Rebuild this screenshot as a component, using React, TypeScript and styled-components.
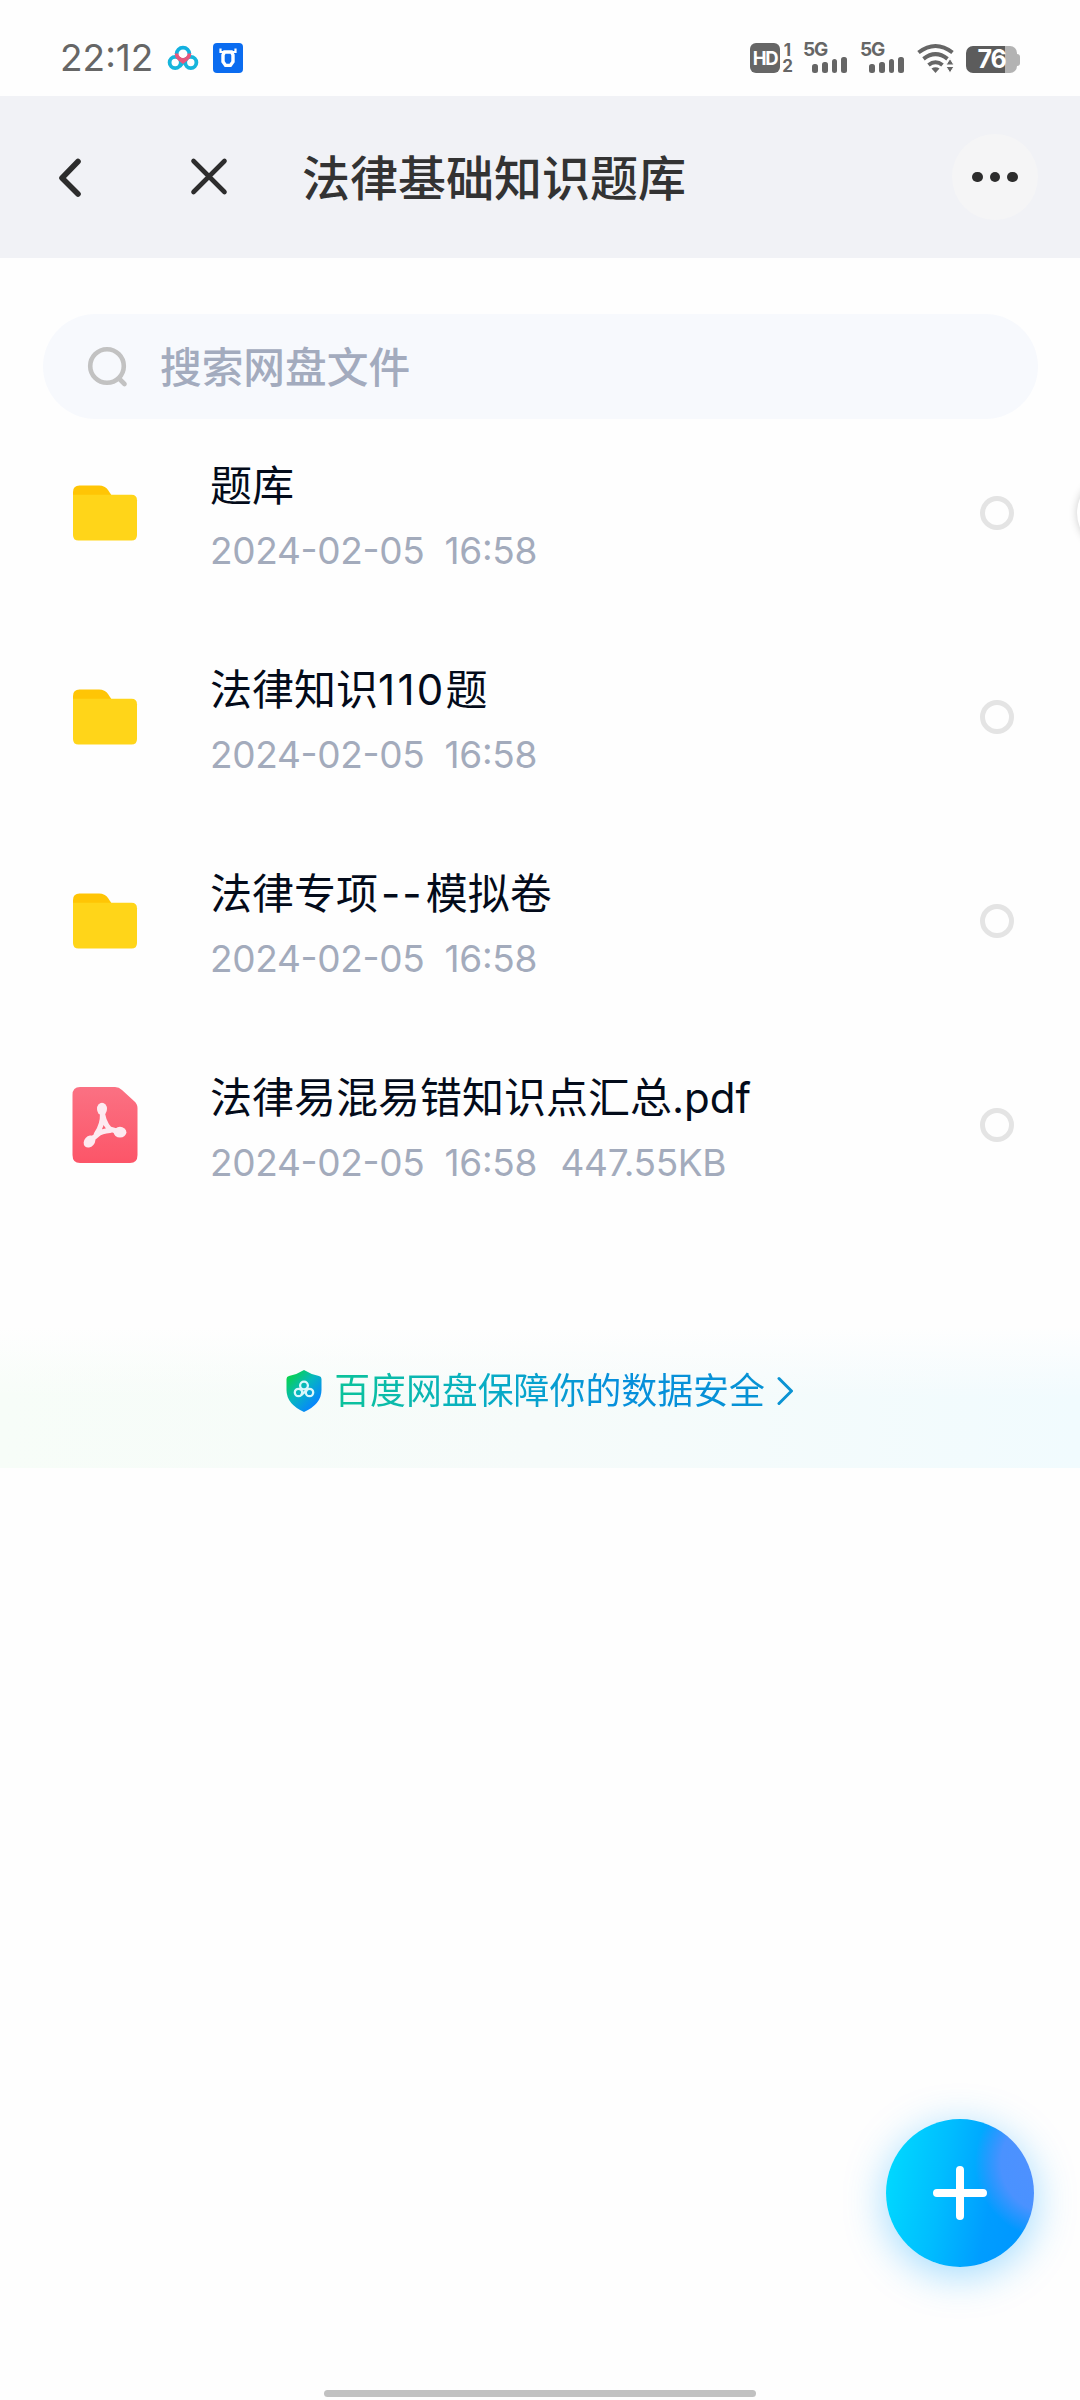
import React from 'react';
import styled, { createGlobalStyle } from 'styled-components';

const GlobalStyle = createGlobalStyle`
  * { box-sizing: border-box; }
  body { margin: 0; background: #fefefe; overflow: hidden; }
`;

const Page = styled.div`
  position: relative;
  width: 1080px;
  height: 2400px;
  overflow: hidden;
  display: flex;
  flex-direction: column;
  background: #fefefe;
  font-family: Inter, "Noto Sans CJK SC", sans-serif;
  font-feature-settings: "calt" 1;
`;

const StatusBar = styled.div`
  height: 96px;
  flex: none;
  display: flex;
  align-items: center;
  padding: 20px 60px 0 60px;
  color: #666;
`;

const Clock = styled.span`
  font-size: 37px;
  line-height: 40px;
  letter-spacing: 0;
  width: 107px;
  white-space: nowrap;
`;

const AppIcons = styled.div`
  display: flex;
  align-items: center;
  gap: 14px;
  flex: 1;
`;

const SystemIcons = styled.div`
  display: flex;
  align-items: center;
`;

const HdGroup = styled.div`
  display: flex;
  gap: 2px;
  margin-right: 10px;
`;

const HdBox = styled.span`
  width: 30px;
  height: 30px;
  border-radius: 6px;
  background: #666;
  color: #fff;
  font: 700 18.5px/30px Inter, sans-serif;
  letter-spacing: -1.4px;
  text-align: center;
`;

const HdSlots = styled.span`
  display: flex;
  flex-direction: column;
  justify-content: space-between;
  width: 11px;
  height: 30px;
  text-align: center;
  font: 700 17px/14px Inter, sans-serif;
`;

const Signal = styled.div`
  display: flex;
  flex-direction: column;
  width: 44px;
  height: 30px;
  margin-right: 13px;
`;

const SignalLabel = styled.span`
  font: 700 19px/14px Inter, sans-serif;
  letter-spacing: -1.2px;
`;

const Bars = styled.span`
  display: flex;
  align-items: flex-end;
  gap: 4px;
  height: 16px;
  padding-left: 9px;
`;

const Bar = styled.i<{ $h: number }>`
  width: 6px;
  height: ${(p) => p.$h}px;
  border-radius: 2.5px;
  background: #666;
`;

const Battery = styled.div`
  display: flex;
  align-items: center;
  margin: 3px 0 0 11px;
`;

const BatteryBody = styled.span`
  width: 51px;
  height: 27px;
  border-radius: 7px;
  background: linear-gradient(90deg, #5c5c5c 39px, #b3b3b3 39px);
  color: #fff;
  font: 700 25px/27px Inter, sans-serif;
  letter-spacing: -1.2px;
  text-align: center;
`;

const BatteryTip = styled.span`
  width: 3px;
  height: 12px;
  border-radius: 0 3px 3px 0;
  background: #b3b3b3;
`;

const Header = styled.header`
  height: 162px;
  flex: none;
  display: flex;
  align-items: center;
  padding: 0 42px 0 50px;
  background: #f1f2f6;
  color: #333;
`;

const IconButton = styled.span<{ $w: number }>`
  display: flex;
  width: ${(p) => p.$w}px;
`;

const Title = styled.h1`
  flex: 1;
  margin: 0;
  padding-top: 3px;
  font-size: 48px;
  line-height: 60px;
  font-weight: 500;
`;

const MoreButton = styled.span`
  display: flex;
  align-items: center;
  justify-content: center;
  gap: 7px;
  width: 86px;
  height: 86px;
  border-radius: 50%;
  background: #f5f5f6;
`;

const Dot = styled.i`
  width: 10.6px;
  height: 10.6px;
  border-radius: 50%;
  background: #2d2d2d;
`;

const SearchBox = styled.div`
  display: flex;
  align-items: center;
  flex: none;
  gap: 31px;
  height: 105px;
  margin: 56px 42px 0 43px;
  padding-left: 44px;
  border-radius: 53px;
  background: #f7f9fd;
  color: #a3abbe;
  font-size: 41.7px;
  font-weight: 500;
  line-height: 60px;
`;

const SearchHint = styled.span`
  padding-top: 3px;
`;

const FileList = styled.div`
  display: flex;
  flex-direction: column;
  flex: none;
  padding-bottom: 100px;
`;

const Row = styled.div`
  display: flex;
  align-items: center;
  height: 204px;
  padding: 0 66px 0 72px;
  &:first-child { margin-top: -8px; }
`;

const IconSlot = styled.span`
  display: flex;
  width: 138px;
`;

const FileInfo = styled.div`
  flex: 1;
  display: flex;
  flex-direction: column;
  gap: 9px;
  padding-top: 10px;
`;

const FileName = styled.span`
  color: #030b1a;
  font-size: 42px;
  line-height: 56px;
  white-space: pre;
`;

const Hyphens = styled.span`
  margin: 0 2px 0 3px;
  letter-spacing: 2px;
`;

const Digits = styled.span`
  letter-spacing: 2.3px;
`;

const FileMeta = styled.span`
  display: flex;
  gap: 23.5px;
  color: #a3abbc;
  font-size: 37px;
  line-height: 56px;
  letter-spacing: -0.32px;
  white-space: pre;
`;

const Radio = styled.span`
  width: 34px;
  height: 34px;
  border: 5px solid #e4e4e4;
  border-radius: 50%;
`;

const SafetyBanner = styled.div`
  display: flex;
  align-items: center;
  justify-content: center;
  flex: none;
  height: 141px;
  padding-bottom: 13px;
  background:
    linear-gradient(180deg, #fefefe 0%, rgba(254, 254, 254, 0) 50%),
    linear-gradient(90deg, #f7fdf8 0%, #f6fbfa 50%, #f1fbfe 100%);
`;

const BannerText = styled.span`
  margin: 0 12px 0 12px;
  font-size: 35.9px;
  line-height: 50px;
  background: linear-gradient(90deg, #0cc39a 0%, #08adc4 35%, #068fdc 65%, #0792d4 100%);
  background-clip: text;
  -webkit-background-clip: text;
  color: transparent;
`;

const SideHandle = styled.div`
  position: absolute;
  left: 1077px;
  top: 475px;
  width: 76px;
  height: 76px;
  border-radius: 50%;
  background: #fff;
  box-shadow: 0 0 9px rgba(0, 0, 0, 0.2);
`;

const AddButton = styled.div`
  position: absolute;
  left: 886px;
  top: 2119px;
  width: 148px;
  height: 148px;
  border-radius: 50%;
  display: flex;
  align-items: center;
  justify-content: center;
  background:
    radial-gradient(circle at 165px 44px, #5090ff 0, #4a92ff 50px, rgba(60, 148, 255, 0) 76px),
    linear-gradient(100deg, #00d8ff 6%, #00bdff 38%, #009dff 68%, #0094ff 100%);
  box-shadow: 0 8px 42px rgba(0, 160, 255, 0.38);
`;

const HomeBar = styled.div`
  position: absolute;
  left: 324px;
  top: 2390px;
  width: 432px;
  height: 7px;
  border-radius: 4px;
  background: #c1c1c1;
`;

const CloudLogo = () => (
  <svg width="32" height="26" viewBox="0 0 32 26" fill="none" strokeWidth="3.8">
    <circle cx="8.2" cy="17.500" r="5.600" stroke="#16b5dc" />
    <circle cx="23.800" cy="17.500" r="5.600" stroke="#16b5dc" />
    <path d="M9.600 9A6.400 6.400 0 0 1 22.400 9" stroke="#12b0e0" />
    <path d="M9.600 8.500A6.400 6.400 0 0 0 22.400 8.500" stroke="#e8567c" />
    <path d="M12.500 21.500L19.500 13.500" stroke="#16b5dc" />
    <path d="M12 13.500L16 16.500L20 13.500" stroke="#e8567c" />
  </svg>
);

const BullLogo = () => (
  <svg width="30" height="30" viewBox="0 0 30 30">
    <rect width="30" height="30" rx="4" fill="#0b6cf0" />
    <g fill="none" stroke="#fff">
      <path d="M7.500 5.500V9h4M22.500 5.500V9h-4" strokeWidth="2.200" />
      <path d="M11.500 9h7l1.500 3v6.800l-2.600 3.600h-4.800l-2.600-3.600v-6.800z" strokeWidth="3.400" />
    </g>
  </svg>
);

const WifiIcon = () => (
  <svg width="38" height="30" viewBox="0 0 38 30" fill="none" stroke="#666" strokeWidth="4">
    <path d="M1.500 9.500Q18.500-3.500 35.500 9.500" />
    <path d="M6.500 15.800Q18.500 6.500 30.500 15.800" />
    <path d="M11.500 22Q18.500 16.500 25.500 22" />
    <path d="M14.500 25.500Q18.500 22.800 22.500 25.500L18.500 30z" fill="#666" stroke="none" />
    <path d="M29 22l4-6.500 4 6.500zM29 23.500l4 6.500 4-6.500z" fill="#666" stroke="#fefefe" strokeWidth="1" />
  </svg>
);

const FolderIcon = () => (
  <svg width="66" height="56" viewBox="0 0 66 56">
    <path d="M1 7Q1 .5 7.500.5H27Q33 .5 36 5L40 11V22H1z" fill="#ffc505" />
    <path d="M1 9.800H59.500Q65 9.800 65 15.300V50Q65 55.500 59.500 55.500H6.500Q1 55.500 1 50z" fill="#ffd519" />
  </svg>
);

const PdfIcon = () => (
  <svg width="66" height="76" viewBox="0 0 66 76">
    <defs>
      <linearGradient id="pdf" x1="0" y1="0" x2="0" y2="1">
        <stop offset="0" stopColor="#fb7183" />
        <stop offset="1" stopColor="#fc5568" />
      </linearGradient>
    </defs>
    <path d="M8 0H43Q47 0 50 3L62 14Q65.500 17 65.500 21V68Q65.500 76 58 76H8Q.5 76 .5 68V8Q.5 0 8 0z" fill="url(#pdf)" />
    <g stroke="#fdeaf0" fill="#fdeaf0" strokeLinecap="round" strokeLinejoin="round">
      <path d="M30 22Q30.500 34 37.500 42L48 45M38 43.500Q29 44 25 48L17.500 54M30.500 27Q31 37 24.500 47" fill="none" strokeWidth="5.200" />
      <ellipse cx="30" cy="22" rx="5" ry="6.200" stroke="none" />
      <ellipse cx="48" cy="45.200" rx="6.400" ry="5.400" stroke="none" />
      <ellipse cx="17.500" cy="54.500" rx="5.200" ry="6.600" transform="rotate(42 17.500 54.500)" stroke="none" />
    </g>
  </svg>
);

const ShieldIcon = () => (
  <svg width="36" height="42" viewBox="0 0 36 42">
    <defs>
      <linearGradient id="shield" x1="0.100" y1="0.100" x2="0.750" y2="0.850">
        <stop offset="0" stopColor="#08d34c" />
        <stop offset="0.500" stopColor="#06b7c0" />
        <stop offset="1" stopColor="#0787fa" />
      </linearGradient>
    </defs>
    <path d="M18 0Q25 4.500 33 6Q35.500 6.500 35.500 9V20Q35.500 34 18 42Q.5 34 .5 20V9Q.5 6.500 3 6Q11 4.500 18 0z" fill="url(#shield)" />
    <g fill="none" stroke="#d9f7fb" strokeWidth="2.300">
      <circle cx="18" cy="15.500" r="3.900" />
      <circle cx="12.500" cy="22.500" r="3.700" />
      <circle cx="23.500" cy="22.500" r="3.700" />
      <path d="M15 25l6-5" />
    </g>
  </svg>
);

const SignalMeter = () => (
  <Signal>
    <SignalLabel>5G</SignalLabel>
    <Bars>
      {[9, 11, 14, 16].map((h) => (
        <Bar key={h} $h={h} />
      ))}
    </Bars>
  </Signal>
);

interface FileItem {
  kind: 'folder' | 'pdf';
  name: React.ReactNode;
  date: string;
  size?: string;
}

const files: FileItem[] = [
  { kind: 'folder', name: '题库', date: '2024-02-05  16:58' },
  { kind: 'folder', name: <>法律知识<Digits>110</Digits>题</>, date: '2024-02-05  16:58' },
  { kind: 'folder', name: <>法律专项<Hyphens>--</Hyphens>模拟卷</>, date: '2024-02-05  16:58' },
  { kind: 'pdf', name: '法律易混易错知识点汇总.pdf', date: '2024-02-05  16:58', size: '447.55KB' },
];

export default function App() {
  return (
    <Page>
      <GlobalStyle />
      <StatusBar>
        <Clock>22:12</Clock>
        <AppIcons>
          <CloudLogo />
          <BullLogo />
        </AppIcons>
        <SystemIcons>
          <HdGroup>
            <HdBox>HD</HdBox>
            <HdSlots>
              <span>1</span>
              <span>2</span>
            </HdSlots>
          </HdGroup>
          <SignalMeter />
          <SignalMeter />
          <WifiIcon />
          <Battery>
            <BatteryBody>76</BatteryBody>
            <BatteryTip />
          </Battery>
        </SystemIcons>
      </StatusBar>

      <Header>
        <IconButton $w={138}>
          <svg width="40" height="44" viewBox="0 0 40 44" fill="none" stroke="#2d2d2d" strokeWidth="5.600" strokeLinecap="round" strokeLinejoin="round">
            <path d="M28 6.500L12 23L28 39" />
          </svg>
        </IconButton>
        <IconButton $w={114}>
          <svg width="42" height="42" viewBox="0 0 42 42" fill="none" stroke="#2d2d2d" strokeWidth="4.600" strokeLinecap="round">
            <path d="M5.500 5L36.500 36M36.500 5L5.500 36" />
          </svg>
        </IconButton>
        <Title>法律基础知识题库</Title>
        <MoreButton>
          <Dot />
          <Dot />
          <Dot />
        </MoreButton>
      </Header>

      <SearchBox>
        <svg width="42" height="42" viewBox="0 0 42 42" fill="none" stroke="#c2c2c2" strokeWidth="4.600" strokeLinecap="round">
          <circle cx="20" cy="20" r="16.800" />
          <path d="M32 32.500L37.500 38" />
        </svg>
        <SearchHint>搜索网盘文件</SearchHint>
      </SearchBox>

      <FileList>
        {files.map((file, i) => (
          <Row key={i}>
            <IconSlot>{file.kind === 'pdf' ? <PdfIcon /> : <FolderIcon />}</IconSlot>
            <FileInfo>
              <FileName>{file.name}</FileName>
              <FileMeta>
                <span>{file.date}</span>
                {file.size && <span>{file.size}</span>}
              </FileMeta>
            </FileInfo>
            <Radio />
          </Row>
        ))}
      </FileList>

      <SafetyBanner>
        <ShieldIcon />
        <BannerText>百度网盘保障你的数据安全</BannerText>
        <svg width="17" height="30" viewBox="0 0 17 30" fill="none" stroke="#0b93d3" strokeWidth="3" strokeLinecap="round" strokeLinejoin="round">
          <path d="M2 2.500L14.500 15L2 27.500" />
        </svg>
      </SafetyBanner>

      <SideHandle />
      <AddButton>
        <svg width="56" height="56" viewBox="0 0 56 56" stroke="#fff" strokeWidth="8" strokeLinecap="round">
          <path d="M28 5V51M5 28H51" />
        </svg>
      </AddButton>
      <HomeBar />
    </Page>
  );
}
